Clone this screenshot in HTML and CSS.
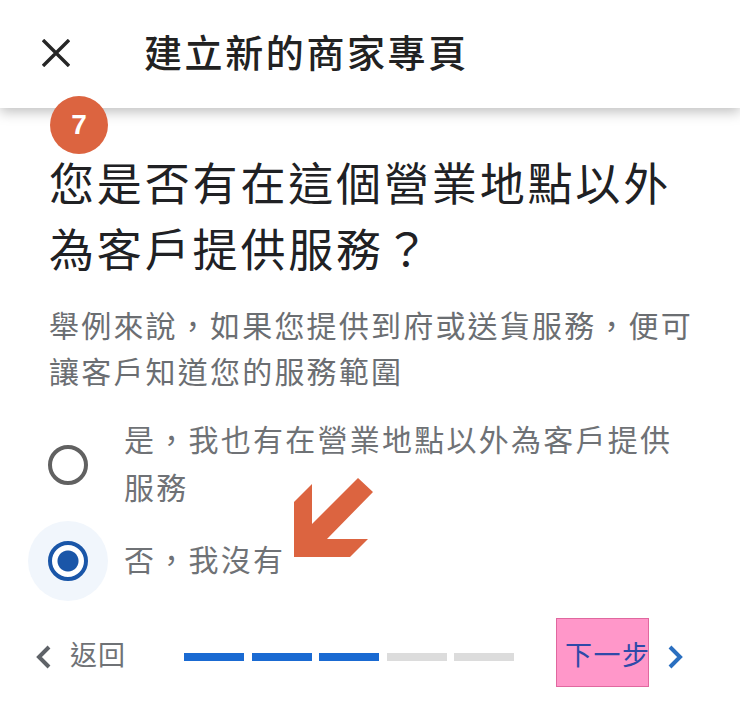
FILE: index.html
```html
<!DOCTYPE html>
<html lang="zh-Hant">
<head>
    <meta charset="UTF-8">
    <meta name="viewport" content="width=device-width, initial-scale=1.0">
    <title>建立新的商家專頁</title>
    <link rel="stylesheet" href="styles.css">
</head>
<body>
    <div class="page">
        <header class="topbar">
            <svg class="close-icon" viewBox="0 0 28 28" width="28" height="28">
                <path d="M1 1 L27 27 M27 1 L1 27" fill="none" stroke="#262626" stroke-width="3.4"/>
            </svg>
            <div class="topbar-title">建立新的商家專頁</div>
        </header>

        <div class="step-badge">7</div>

        <main class="content">
            <h1 class="question">您是否有在這個營業地點以外<br>為客戶提供服務？</h1>
            <p class="hint">舉例來說，如果您提供到府或送貨服務，便可<br>讓客戶知道您的服務範圍</p>

            <div class="option option-first">
                <div class="radio-wrap"><span class="radio"></span></div>
                <div class="option-label">是，我也有在營業地點以外為客戶提供<br>服務</div>
            </div>
            <div class="option option-second">
                <div class="radio-wrap radio-wrap-on"><span class="radio radio-on"></span></div>
                <div class="option-label">否，我沒有</div>
            </div>
        </main>

        <!-- annotation arrow over the page -->
        <svg class="arrow-mark" viewBox="0 0 81 80" width="81" height="80">
            <path d="M19 6 L1 24 L1 79 L57 79 L75 61 L34 61 L80 14 L65 0 L19 46 Z" fill="#dc6440"/>
        </svg>

        <footer class="bottombar">
            <svg class="chevron" viewBox="0 0 16 24" width="16" height="24">
                <path d="M14 2 L4 12 L14 22" fill="none" stroke="#5f6368" stroke-width="4"/>
            </svg>
            <div class="back-label">返回</div>
            <div class="progress">
                <span class="seg seg-on"></span>
                <span class="seg seg-on"></span>
                <span class="seg seg-on"></span>
                <span class="seg"></span>
                <span class="seg"></span>
            </div>
            <div class="next-btn">下一步</div>
            <svg class="chevron-next" viewBox="0 0 16 24" width="16" height="24">
                <path d="M3 2 L13 12 L3 22" fill="none" stroke="#2a6fc0" stroke-width="4"/>
            </svg>
        </footer>
    </div>
</body>
</html>
```

FILE: styles.css
```css
html, body {
    margin: 0;
    padding: 0;
    background-color: #fff;
}
body {
    font-family: "Noto Sans CJK TC", "Liberation Sans", sans-serif;
}
.page {
    position: relative;
    width: 740px;
    height: 707px;
    overflow: hidden;
}
.topbar {
    display: flex;
    align-items: center;
    height: 108px;
    padding-left: 42px;
    box-shadow: 0 4px 12px rgba(0, 0, 0, 0.25);
    background-color: #fff;
}
.close-icon {
    flex: none;
    margin-bottom: 2px;
}
.topbar-title {
    margin: 0 0 8px 74px;
    font-size: 38px;
    font-weight: 500;
    letter-spacing: 2.6px;
    color: #222;
}
.step-badge {
    position: absolute;
    left: 50px;
    top: 96px;
    width: 58px;
    height: 58px;
    border-radius: 50%;
    background-color: #dc6440;
    color: #fff;
    font-family: "Liberation Sans", sans-serif;
    font-size: 28px;
    font-weight: bold;
    line-height: 58px;
    text-align: center;
}
.content {
    padding: 41px 0 0 49px;
}
.question {
    margin: 0;
    font-size: 45px;
    font-weight: 400;
    line-height: 66px;
    letter-spacing: 2.85px;
    color: #202124;
}
.hint {
    margin: 20px 0 0;
    font-size: 30px;
    line-height: 46px;
    letter-spacing: 2.2px;
    color: #6b6e72;
}
.option {
    display: flex;
    align-items: center;
    margin-left: -21px;
}
.option-first {
    margin-top: 21px;
}
.option-first .radio-wrap {
    margin-top: 6px;
}
.option-second {
    margin-top: 11px;
}
.option-second .option-label {
    margin-top: -6px;
}
.radio-wrap {
    display: flex;
    flex: none;
    align-items: center;
    justify-content: center;
    width: 80px;
    height: 80px;
    border-radius: 50%;
}
.radio-wrap-on {
    background-color: #f1f6fc;
}
.radio {
    box-sizing: border-box;
    display: block;
    width: 40px;
    height: 40px;
    border: 4px solid #616161;
    border-radius: 50%;
}
.radio-on {
    border-color: #1a56a8;
    background: radial-gradient(circle, #1a56a8 0, #1a56a8 10px, #fff 11px);
}
.option-label {
    margin-left: 16px;
    font-size: 30px;
    line-height: 48px;
    letter-spacing: 2.25px;
    color: #6f7276;
}
.arrow-mark {
    position: absolute;
    left: 293px;
    top: 478px;
}
.bottombar {
    position: absolute;
    left: 0;
    right: 0;
    top: 618px;
    display: flex;
    align-items: center;
    height: 69px;
}
.chevron {
    flex: none;
    margin: 8px 0 0 35px;
}
.back-label {
    margin: 2px 0 0 19px;
    font-size: 27px;
    letter-spacing: 1px;
    color: #6f7276;
}
.progress {
    display: flex;
    gap: 7.5px;
    margin: 8px 0 0 58px;
}
.seg {
    display: block;
    width: 60px;
    height: 8px;
    background-color: #dcdcdc;
}
.seg-on {
    background-color: #1a6ad2;
}
.next-btn {
    box-sizing: border-box;
    flex: none;
    width: 93px;
    height: 69px;
    margin-left: 42px;
    padding: 15px 0 0 8px;
    border: 1px solid #e0689f;
    background-color: #ff97c9;
    color: #2f4aa8;
    font-size: 27px;
    letter-spacing: 1.5px;
    white-space: nowrap;
    overflow: hidden;
}
.chevron-next {
    flex: none;
    margin: 8px 0 0 18px;
}
```
